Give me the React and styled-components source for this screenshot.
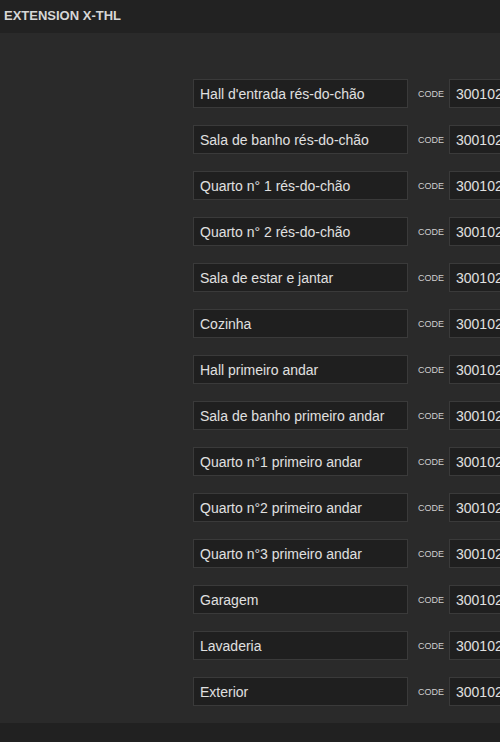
import React from "react";
import styled, { createGlobalStyle } from "styled-components";

const Global = createGlobalStyle`
  html, body { margin: 0; padding: 0; background: #212121; overflow: hidden; }
  body { font-family: "Liberation Sans", Arial, sans-serif; }
`;

const Page = styled.div`
  width: 500px;
  height: 742px;
  overflow: hidden;
  background: #212121;
`;

const Header = styled.div`
  height: 33px;
  background: #222222;
  display: flex;
  align-items: center;
  padding-left: 4px;
  padding-bottom: 2px;
  box-sizing: border-box;
`;

const Title = styled.h1`
  margin: 0;
  font-size: 13px;
  font-weight: bold;
  color: #d6d6d6;
`;

const Content = styled.div`
  background: #2a2a2a;
  padding: 46px 0 17px 193px;
  display: flex;
  flex-direction: column;
  gap: 17px;
`;

const Row = styled.div`
  display: flex;
  align-items: center;
  height: 29px;
  white-space: nowrap;
`;

const Field = styled.div`
  box-sizing: border-box;
  height: 29px;
  width: ${(p) => p.$w}px;
  flex: none;
  background: #1f1f1f;
  border: 1px solid #3a3a3a;
  color: #e0e0e0;
  font-size: 14px;
  line-height: 27px;
  padding: 1px 0 0 6px;
  overflow: hidden;
`;

const Label = styled.span`
  font-size: 9px;
  color: #cfcfcf;
  margin: 1px 5px 0 10px;
  width: 26px;
  flex: none;
`;

const rooms = [
  "Hall d'entrada rés-do-chão",
  "Sala de banho rés-do-chão",
  "Quarto n° 1 rés-do-chão",
  "Quarto n° 2 rés-do-chão",
  "Sala de estar e jantar",
  "Cozinha",
  "Hall primeiro andar",
  "Sala de banho primeiro andar",
  "Quarto n°1 primeiro andar",
  "Quarto n°2 primeiro andar",
  "Quarto n°3 primeiro andar",
  "Garagem",
  "Lavaderia",
  "Exterior",
];

export default function App() {
  return (
    <Page>
      <Global />
      <Header>
        <Title>EXTENSION X-THL</Title>
      </Header>
      <Content>
        {rooms.map((r, i) => (
          <Row key={i}>
            <Field $w={215}>{r}</Field>
            <Label>CODE</Label>
            <Field $w={120}>{`300102${i + 1}`}</Field>
          </Row>
        ))}
      </Content>
    </Page>
  );
}
